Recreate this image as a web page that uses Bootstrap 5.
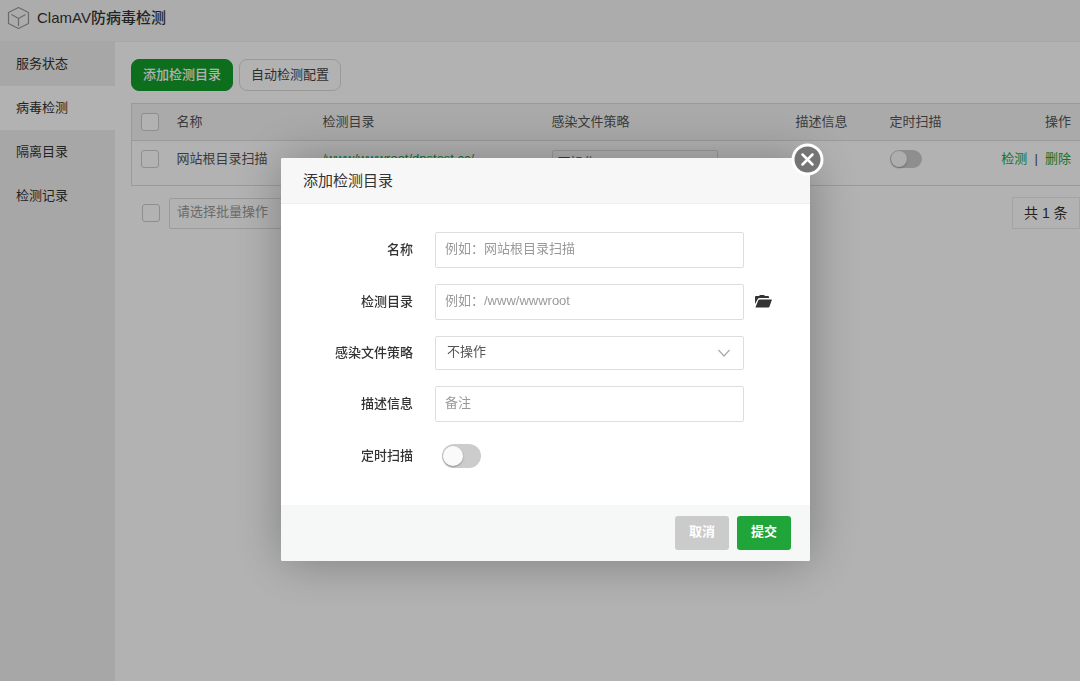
<!DOCTYPE html>
<html lang="zh-CN">
<head>
<meta charset="utf-8">
<meta name="viewport" content="width=device-width, initial-scale=1">
<title>ClamAV防病毒检测</title>
<link href="https://cdn.jsdelivr.net/npm/bootstrap@5.3.0/dist/css/bootstrap.min.css" rel="stylesheet">
<style>
  body { font-family: "Liberation Sans", "Noto Sans CJK SC", sans-serif; font-size: 13px; line-height: 18px; color: #444; background: #fff; overflow: hidden; }
  a { color: #20a53a; text-decoration: none; }
  .app-header { height: 42px; background: #f7f7f7; border-bottom: 1px solid #f0f0f0; font-size: 15px; font-weight: 500; color: #333; padding: 0 7px 6px; gap: 7px; }
  .app-side { width: 115px; background: #f0f0f0; }
  .app-side .nav-link { color: #333; height: 44px; padding: 13px 16px; }
  .app-side .nav-link.active { background: #fff; }
  .app-main { padding: 17px 0 0 16px; min-width: 0; }
  .btn { font-size: 13px; line-height: 18px; }
  .tool-bar { gap: 6px; margin-bottom: 12px; }
  .btn-tool { height: 32px; padding: 6px 11px; border-radius: 8px; border-color: #dcdcdc; color: #444; }
  .btn-tool-main { background: #139e2c; border-color: #139e2c; color: #fff; font-weight: 500; }
  .scan-table { table-layout: fixed; width: calc(100% + 1px); font-size: 13px; border: 1px solid #ddd; color: #555; margin: 0; --bs-table-color: #555; }
  .scan-table th, .scan-table td { padding: 9px; border-color: #ddd; vertical-align: top; white-space: nowrap; font-weight: 400; }
  .scan-table th { background: #f4f4f4; color: #555; }
  .scan-table td { height: 45px; }
  .form-check-input { width: 18px; height: 18px; margin: 0; border-color: #ccc; flex: none; display: block; }
  .form-check-input[type=checkbox] { border-radius: 3px; }
  .form-check-input.toggle[type=checkbox] { border-radius: 12px; border: 0; background: #ccc; width: 32px; padding: 1px; }
  .toggle::before { content: ""; display: block; width: 16px; height: 16px; border-radius: 50%; background: #fafafa; box-shadow: 0 1px 2px rgba(0,0,0,.3); }
  .form-check-input.toggle-lg[type=checkbox] { width: 39px; height: 24px; margin-left: 7px; padding: 2px 1px; }
  .toggle-lg::before { width: 20px; height: 20px; }
  .form-control, .form-select { font-size: 13px; line-height: 18px; border-color: #ddd; border-radius: 2px; color: #555; }
  .form-control { height: 36px; padding: 6px 9px 10px; }
  .form-control::placeholder { color: #999; }
  .form-select { height: 34px; padding: 6px 36px 8px 11px; background-position: right 12px center; background-size: 14px 14px;
    --bs-form-select-bg-img: url("data:image/svg+xml,%3Csvg xmlns='http://www.w3.org/2000/svg' viewBox='0 0 14 14'%3E%3Cpath d='M1.5 4l5.5 6 5.5-6' fill='none' stroke='%23aaa' stroke-width='1.2'/%3E%3C/svg%3E"); }
  .row-select { width: 166px; height: 26px; padding: 3px 5px; }
  .batch-row { padding: 11px 0 0 11px; gap: 9px; }
  .batch-select { width: 180px; height: 31px; padding: 4px 7px 7px; color: #999; }
  .total-box { border: 1px solid #ebebeb; padding: 6px 11px; color: #333; width: 68px; height: 32px; font-size: 14px; white-space: nowrap; }
  .modal-backdrop { --bs-backdrop-opacity: .3; }
  .add-modal { padding-left: 11px; }
  .add-modal .modal-dialog { max-width: 529px; margin: 158px auto 0; }
  .add-modal .modal-content { border: 0; border-radius: 2px; box-shadow: 1px 1px 50px rgba(0,0,0,.3); color: #333; }
  .add-modal .modal-header { height: 46px; padding: 0 22px; background: #f7f7f7; border-bottom: 1px solid #eee; border-radius: 2px 2px 0 0; }
  .add-modal .modal-title { font-size: 15px; line-height: 22px; font-weight: 400; }
  .add-modal .modal-body { padding: 28px 38px 32px 0; gap: 16px; }
  .form-line { display: grid; grid-template-columns: 132px minmax(0, 1fr) 17px; column-gap: 11px; align-items: center; }
  .form-line label { text-align: right; font-weight: 500; }
  .form-line .field { margin-left: 11px; }
  .switch-line { height: 35px; }
  .icon-btn { border: 0; background: none; padding: 0; line-height: 0; }
  .add-modal .modal-footer { height: 56px; padding: 0 19px; gap: 8px; background: #f6f8f8; border: 0; border-radius: 0 0 2px 2px; }
  .add-modal .modal-footer .btn { width: 54px; height: 34px; margin: 0; padding: 6px 0 8px; border: 0; border-radius: 3px; color: #fff; font-weight: 700; }
  .btn-cancel, .btn-cancel:hover { background: #cbcbcb; }
  .btn-send, .btn-send:hover { background: #20a53a; }
  .close-round { position: absolute; top: -15px; right: -14px; width: 33px; height: 33px; border: 0; background: none; padding: 0; line-height: 0; }
</style>
</head>
<body>
<div class="d-flex flex-column vh-100">
  <header class="app-header d-flex align-items-center">
    <svg width="23" height="24" viewBox="0 0 23 24" fill="none" stroke="#999" stroke-width="1.2" stroke-linejoin="round" aria-hidden="true"><path d="M11.5 1.500L21.500 6.500V17.500L11.500 22.500L1.500 17.500V6.500ZM4.500 8.500L11.500 12.500L18.500 8.500M11.500 12.500V20"/></svg>
    <span>ClamAV防病毒检测</span>
  </header>
  <div class="d-flex flex-grow-1">
    <nav class="app-side nav flex-column flex-nowrap flex-shrink-0">
      <a class="nav-link" href="#">服务状态</a>
      <a class="nav-link active" href="#">病毒检测</a>
      <a class="nav-link" href="#">隔离目录</a>
      <a class="nav-link" href="#">检测记录</a>
    </nav>
    <main class="app-main flex-grow-1">
      <div class="tool-bar d-flex">
        <button type="button" class="btn btn-tool btn-tool-main">添加检测目录</button>
        <button type="button" class="btn btn-tool">自动检测配置</button>
      </div>
      <table class="table scan-table">
        <colgroup><col width="36"><col width="146"><col width="229"><col width="244"><col width="94"><col></colgroup>
        <thead>
          <tr><th><input class="form-check-input" type="checkbox" aria-label="全选"></th><th>名称</th><th>检测目录</th><th>感染文件策略</th><th>描述信息</th><th>定时扫描</th><th class="text-end">操作</th></tr>
        </thead>
        <tbody>
          <tr>
            <td><input class="form-check-input" type="checkbox" aria-label="选择"></td>
            <td>网站根目录扫描</td>
            <td><a href="#">/www/wwwroot/dnstest.cc/</a></td>
            <td><select class="form-select row-select" aria-label="感染文件策略"><option>不操作</option></select></td>
            <td></td>
            <td><input class="form-check-input toggle" type="checkbox" role="switch" aria-label="定时扫描"></td>
            <td class="text-end"><a href="#">检测</a>&nbsp; | &nbsp;<a href="#">删除</a></td>
          </tr>
        </tbody>
      </table>
      <div class="batch-row d-flex align-items-center">
        <input class="form-check-input" type="checkbox" aria-label="批量选择">
        <select class="form-select batch-select" aria-label="批量操作"><option>请选择批量操作</option></select>
        <span class="total-box ms-auto">共 1 条</span>
      </div>
    </main>
  </div>
</div>

<div class="modal add-modal show d-block" tabindex="-1" role="dialog" aria-labelledby="addTitle">
  <div class="modal-dialog">
    <form class="modal-content">
      <div class="modal-header"><h1 class="modal-title" id="addTitle">添加检测目录</h1></div>
      <button type="button" class="close-round" aria-label="关闭">
        <svg width="33" height="33" viewBox="0 0 33 33"><circle cx="16.500" cy="16.500" r="14.500" fill="#757575" stroke="#fff" stroke-width="3"/><path d="M11.500 11.500l10 10m0-10l-10 10" stroke="#fff" stroke-width="2.500" stroke-linecap="round"/></svg>
      </button>
      <div class="modal-body d-flex flex-column">
        <div class="form-line"><label for="fName">名称</label><div class="field"><input id="fName" class="form-control" type="text" placeholder="例如：网站根目录扫描"></div></div>
        <div class="form-line"><label for="fDir">检测目录</label><div class="field"><input id="fDir" class="form-control" type="text" placeholder="例如：/www/wwwroot"></div>
          <button type="button" class="icon-btn" aria-label="选择目录"><svg width="17" height="14" viewBox="0 0 17 14" fill="#333"><path d="M0 9V2Q0 1 1 1H4L5 0H9L10 1H13Q14 1 14 2V3H4.500Q3.300 3 2.800 4Z"/><path d="M4.600 4.500H16.500Q17 4.500 16.800 5L14.500 11.500Q14.200 12.500 13.200 12.500H0.800Q0.400 12.500 0.600 12L3.200 5.500Q3.700 4.500 4.600 4.500Z"/></svg></button></div>
        <div class="form-line"><label for="fPolicy">感染文件策略</label><div class="field"><select id="fPolicy" class="form-select"><option>不操作</option></select></div></div>
        <div class="form-line"><label for="fNote">描述信息</label><div class="field"><input id="fNote" class="form-control" type="text" placeholder="备注"></div></div>
        <div class="form-line switch-line"><label for="fCron">定时扫描</label><div class="field"><input id="fCron" class="form-check-input toggle toggle-lg" type="checkbox" role="switch"></div></div>
      </div>
      <div class="modal-footer flex-nowrap">
        <button type="button" class="btn btn-cancel">取消</button>
        <button type="submit" class="btn btn-send">提交</button>
      </div>
    </form>
  </div>
</div>
<div class="modal-backdrop show"></div>
<script src="https://cdn.jsdelivr.net/npm/bootstrap@5.3.0/dist/js/bootstrap.bundle.min.js"></script>
</body>
</html>
